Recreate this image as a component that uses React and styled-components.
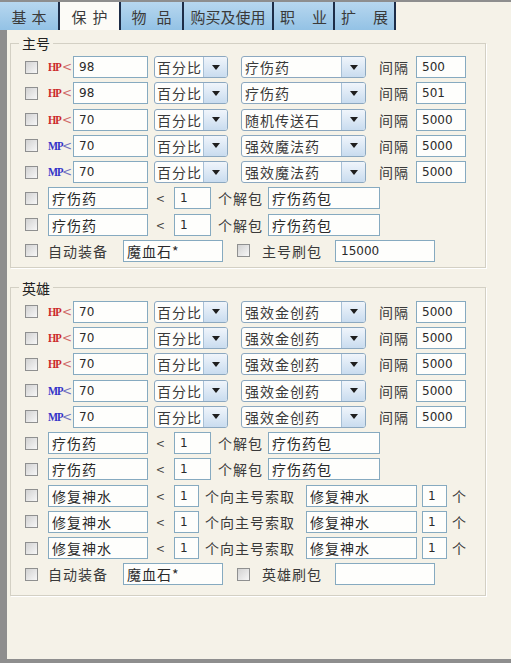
import React from "react";
import styled, { createGlobalStyle } from "styled-components";

const Global = createGlobalStyle`
  html, body { margin: 0; padding: 0; background: #f5f2e8; }
  * { box-sizing: border-box; }
`;

const CJK = `"Noto Sans CJK SC", "Noto Sans", sans-serif`;

const Window = styled.div`
  width: 511px;
  height: 663px;
  display: flex;
  flex-direction: column;
  background: #f5f2e8;
  border-top: 2px solid #8e8e8e;
  font-family: ${CJK};
  color: #333;
`;

const TabBar = styled.div`
  display: flex;
  height: 28px;
  flex: none;
`;

const Tab = styled.div`
  width: ${(p) => p.$w}px;
  height: 28px;
  display: flex;
  align-items: center;
  justify-content: center;
  gap: ${(p) => p.$gap}px;
  border-right: 2px solid #1d2d48;
  background: ${(p) =>
    p.$active ? "#fcfbf7" : "linear-gradient(#b7d7ef, #93c2e5)"};
  font-size: 15px;
  line-height: 1;
  color: #3a3a3a;
  white-space: nowrap;
`;

const Panel = styled.div`
  flex: 1;
  border-left: 7px solid #8e8e8e;
  border-bottom: 4px solid #8e8e8e;
  padding-left: 3px;
  display: flex;
  flex-direction: column;
`;

const Group = styled.fieldset`
  width: 476px;
  margin: ${(p) => p.$mt}px 0 0 0;
  padding: 5px 0 ${(p) => p.$pb}px 14px;
  border: 1px solid #d3d0c4;
  box-shadow: 1px 1px 0 #ffffff;
  min-width: 0;
`;

const Legend = styled.legend`
  margin-left: -6px;
  padding: 0 3px;
  font-size: 14px;
  line-height: 16px;
  color: #222;
`;

const Rows = styled.div`
  display: flex;
  flex-direction: column;
  gap: 4.25px;
`;

const Row = styled.div`
  display: flex;
  align-items: center;
  height: 22px;
`;

const Check = styled.input.attrs({ type: "checkbox" })`
  appearance: none;
  -webkit-appearance: none;
  margin: 0 0 0 ${(p) => p.$ml || 0}px;
  width: 13px;
  height: 13px;
  flex: none;
  border: 1px solid #8f9090;
  background: linear-gradient(135deg, #d2d2d2, #f7f7f7);
`;

const Label = styled.span`
  flex: none;
  width: ${(p) => p.$w}px;
  margin-left: ${(p) => p.$ml || 0}px;
  text-align: ${(p) => (p.$center ? "center" : "left")};
  font-size: 14px;
  letter-spacing: 1px;
  line-height: 22px;
  color: #3a3a3a;
  white-space: nowrap;
`;

const Stat = styled.span`
  flex: none;
  width: 25px;
  margin-left: 10px;
  display: flex;
  align-items: center;
  line-height: 22px;
`;

const StatName = styled.b`
  font-family: "Liberation Serif", serif;
  font-size: 12.5px;
  letter-spacing: -1.2px;
  transform: scaleX(0.85);
  transform-origin: left center;
  display: inline-block;
  width: 13px;
  color: ${(p) => (p.$mp ? "#3434c8" : "#cc2b2b")};
`;

const Lt = styled.span`
  font-family: "DejaVu Sans", sans-serif;
  font-size: 12px;
  margin-left: 1px;
  color: ${(p) => (p.$mp ? "#7070c0" : "#d06a6a")};
`;

const Field = styled.input.attrs({ readOnly: true })`
  flex: none;
  width: ${(p) => p.$w}px;
  height: 22px;
  margin: 0 0 0 ${(p) => p.$ml || 0}px;
  padding: 0 0 0 ${(p) => (p.$num ? 5 : 3)}px;
  border: 1px solid #86aac0;
  background: #fefefc;
  outline: none;
  color: #2a2a2a;
  font-family: ${(p) => (p.$num ? `"DejaVu Sans", sans-serif` : CJK)};
  font-size: ${(p) => (p.$num ? 12 : 14)}px;
  letter-spacing: ${(p) => (p.$num ? 0 : 1)}px;
`;

const Select = styled.div`
  flex: none;
  width: ${(p) => p.$w}px;
  height: 22px;
  margin-left: ${(p) => p.$ml}px;
  display: flex;
  border: 1px solid #8ca8c0;
  border-radius: 3px;
  background: #fefefc;
  overflow: hidden;
`;

const SelectText = styled.span`
  flex: 1;
  padding-left: ${(p) => p.$pl}px;
  font-size: 14px;
  letter-spacing: 1px;
  line-height: 20px;
  color: #3a3a3a;
  white-space: nowrap;
`;

const SelectButton = styled.span`
  width: 24px;
  flex: none;
  display: flex;
  align-items: center;
  justify-content: center;
  border-left: 1px solid #a8c0d6;
  background: linear-gradient(#f0f5fb, #c9dcef);
`;

const Arrow = () => (
  <svg width="8" height="5" viewBox="0 0 8 5">
    <polygon points="0,0 8,0 4,5" fill="#1e1e1e" />
  </svg>
);

const Drop = ({ w, ml, pl, text }) => (
  <Select $w={w} $ml={ml}>
    <SelectText $pl={pl}>{text}</SelectText>
    <SelectButton>
      <Arrow />
    </SelectButton>
  </Select>
);

const StatRow = ({ stat, v, item, gap }) => {
  const mp = stat === "MP";
  return (
    <Row>
      <Check />
      <Stat>
        <StatName $mp={mp}>{stat}</StatName>
        <Lt $mp={mp}>&lt;</Lt>
      </Stat>
      <Field $num $w={75} defaultValue={v} />
      <Drop w={74} ml={6} pl={2} text="百分比" />
      <Drop w={125} ml={13} pl={3} text={item} />
      <Label $w={37} $ml={13}>间隔</Label>
      <Field $num $w={50} defaultValue={gap} />
    </Row>
  );
};

const UnpackRow = () => (
  <Row>
    <Check />
    <Field $w={100} $ml={10} defaultValue="疗伤药" />
    <Label $w={26} $center>&lt;</Label>
    <Field $num $w={37} defaultValue="1" />
    <Label $w={50} $ml={7}>个解包</Label>
    <Field $w={112} defaultValue="疗伤药包" />
  </Row>
);

const RequestRow = () => (
  <Row>
    <Check />
    <Field $w={100} $ml={10} defaultValue="修复神水" />
    <Label $w={26} $center>&lt;</Label>
    <Field $num $w={25} defaultValue="1" />
    <Label $w={101} $ml={6}>个向主号索取</Label>
    <Field $w={111} defaultValue="修复神水" />
    <Field $num $w={25} $ml={5} defaultValue="1" />
    <Label $w={16} $ml={5}>个</Label>
  </Row>
);

const EquipRow = ({ label, bag }) => (
  <Row>
    <Check />
    <Label $w={75} $ml={10}>自动装备</Label>
    <Field $w={100} defaultValue="魔血石*" />
    <Check $ml={14} />
    <Label $w={73} $ml={12}>{label}</Label>
    <Field $num $w={100} defaultValue={bag} />
  </Row>
);

const mainRows = [
  { stat: "HP", v: "98", item: "疗伤药", gap: "500" },
  { stat: "HP", v: "98", item: "疗伤药", gap: "501" },
  { stat: "HP", v: "70", item: "随机传送石", gap: "5000" },
  { stat: "MP", v: "70", item: "强效魔法药", gap: "5000" },
  { stat: "MP", v: "70", item: "强效魔法药", gap: "5000" },
];

const heroRows = [
  { stat: "HP", v: "70", item: "强效金创药", gap: "5000" },
  { stat: "HP", v: "70", item: "强效金创药", gap: "5000" },
  { stat: "HP", v: "70", item: "强效金创药", gap: "5000" },
  { stat: "MP", v: "70", item: "强效金创药", gap: "5000" },
  { stat: "MP", v: "70", item: "强效金创药", gap: "5000" },
];

const tabs = [
  { t: ["基", "本"], w: 60, gap: 5 },
  { t: ["保", "护"], w: 61, gap: 6, active: true },
  { t: ["物", "品"], w: 63, gap: 10 },
  { t: ["购买及使用"], w: 90, gap: 0 },
  { t: ["职", "业"], w: 61, gap: 17 },
  { t: ["扩", "展"], w: 61, gap: 17 },
];

export default function App() {
  return (
    <>
      <Global />
      <Window>
        <TabBar>
          {tabs.map((t) => (
            <Tab key={t.t.join("")} $w={t.w} $gap={t.gap} $active={t.active}>
              {t.t.map((c) => (
                <span key={c}>{c}</span>
              ))}
            </Tab>
          ))}
        </TabBar>
        <Panel>
          <Group $mt={5} $pb={5}>
            <Legend>主号</Legend>
            <Rows>
              {mainRows.map((r, i) => (
                <StatRow key={i} {...r} />
              ))}
              <UnpackRow />
              <UnpackRow />
              <EquipRow label="主号刷包" bag="15000" />
            </Rows>
          </Group>
          <Group $mt={12} $pb={10}>
            <Legend>英雄</Legend>
            <Rows>
              {heroRows.map((r, i) => (
                <StatRow key={i} {...r} />
              ))}
              <UnpackRow />
              <UnpackRow />
              <RequestRow />
              <RequestRow />
              <RequestRow />
              <EquipRow label="英雄刷包" bag="" />
            </Rows>
          </Group>
        </Panel>
      </Window>
    </>
  );
}
